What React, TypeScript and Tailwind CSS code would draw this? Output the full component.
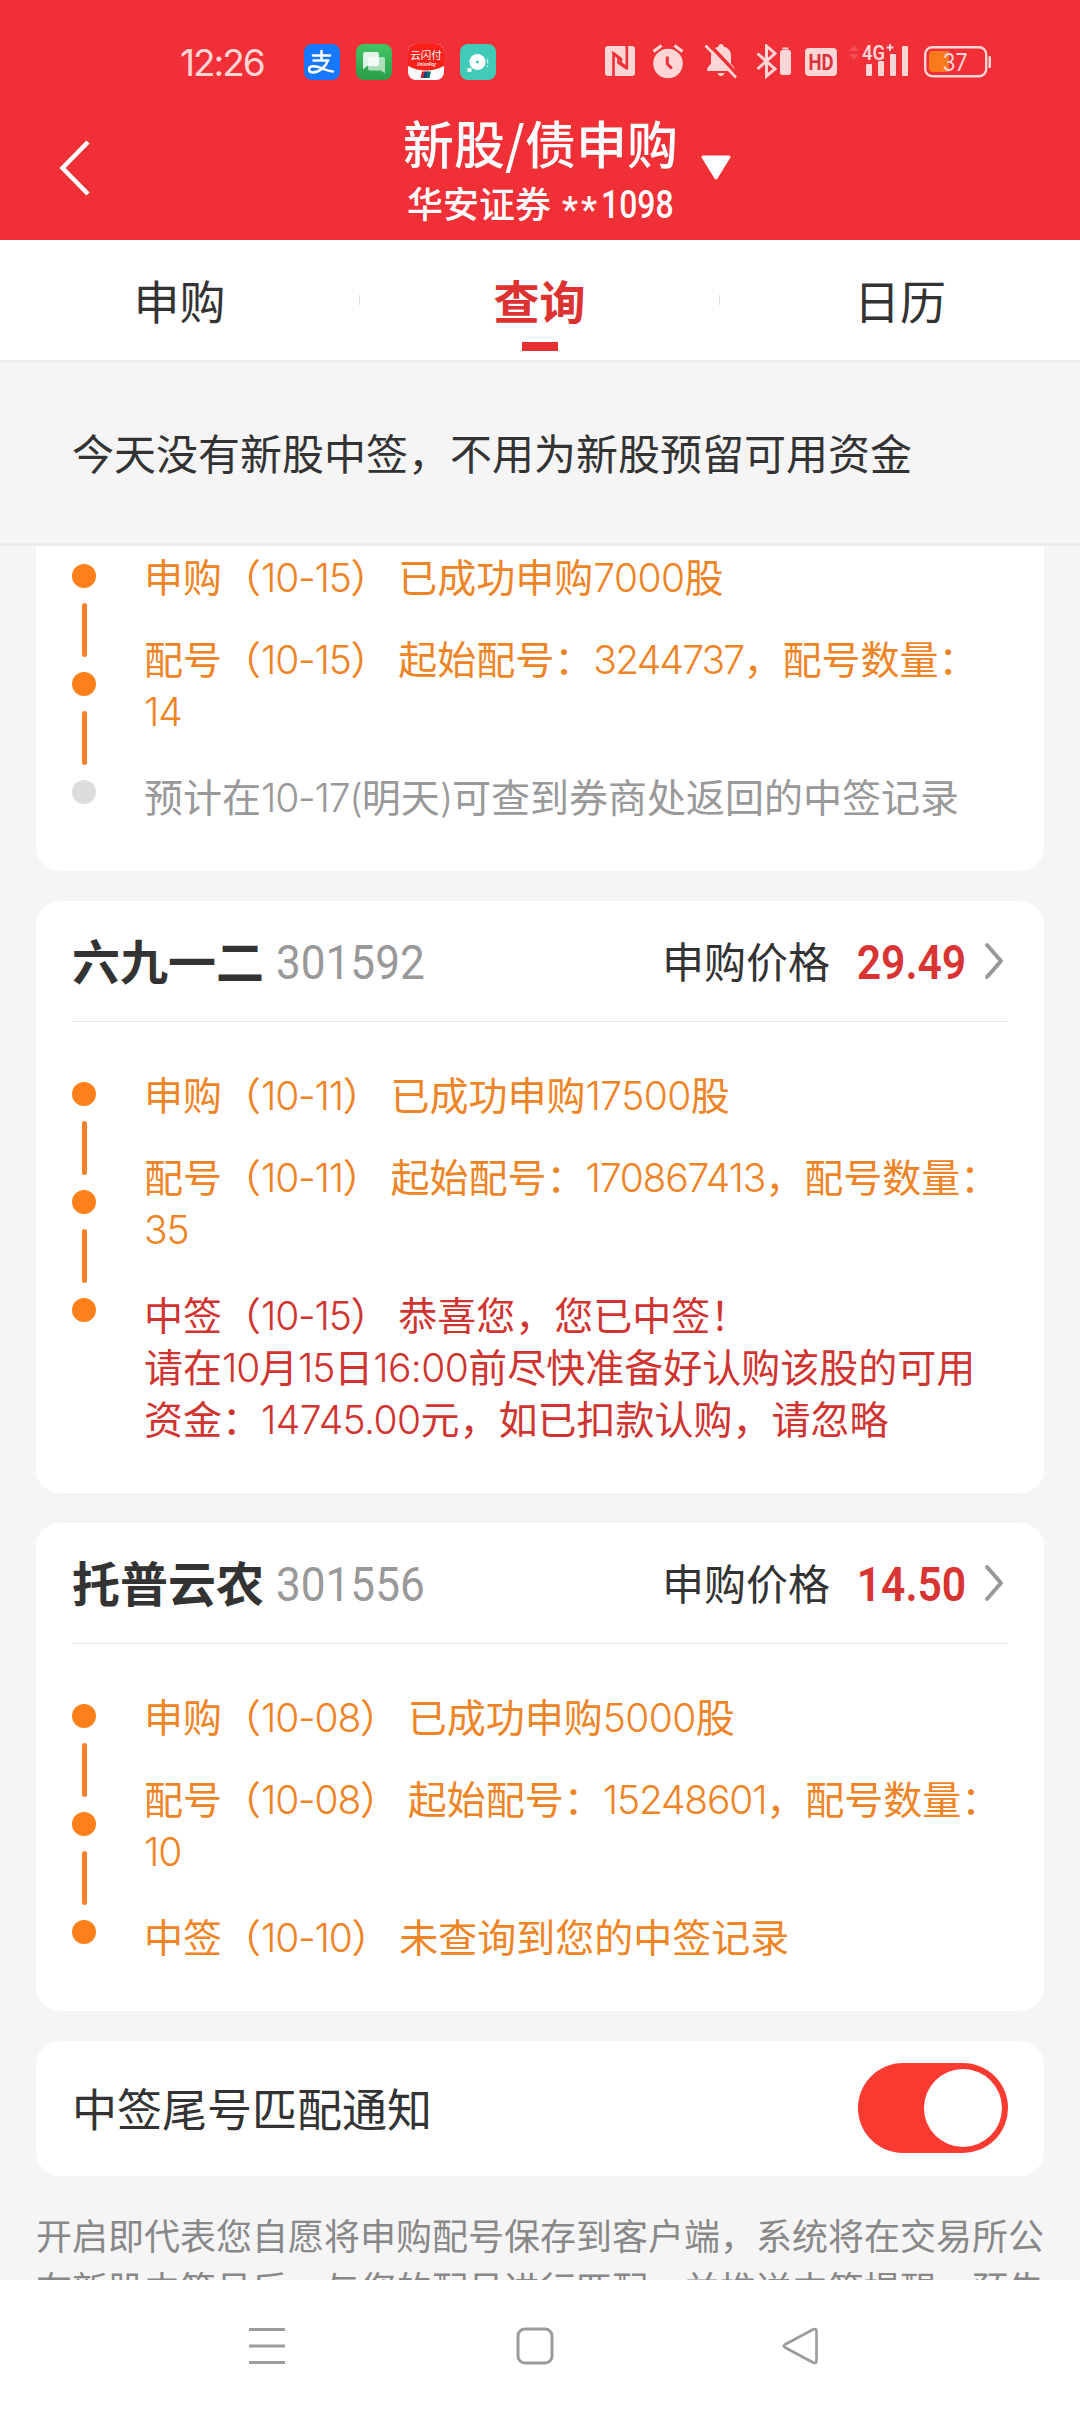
import { useState } from "react";
import clsx from "clsx";

type Tone = "orange" | "red" | "gray";

interface Step {
  lines: string[];
  tone: Tone;
}

interface Record {
  name: string;
  code: string;
  price: string;
  steps: Step[];
}

const tabs = ["申购", "查询", "日历"];

const firstSteps: Step[] = [
  { tone: "orange", lines: ["申购（10-15） 已成功申购7000股"] },
  { tone: "orange", lines: ["配号（10-15） 起始配号：3244737，配号数量：", "14"] },
  { tone: "gray", lines: ["预计在10-17(明天)可查到券商处返回的中签记录"] },
];

const records: Record[] = [
  {
    name: "六九一二",
    code: "301592",
    price: "29.49",
    steps: [
      { tone: "orange", lines: ["申购（10-11） 已成功申购17500股"] },
      { tone: "orange", lines: ["配号（10-11） 起始配号：170867413，配号数量：", "35"] },
      {
        tone: "red",
        lines: [
          "中签（10-15） 恭喜您，您已中签！",
          "请在10月15日16:00前尽快准备好认购该股的可用",
          "资金：14745.00元，如已扣款认购，请忽略",
        ],
      },
    ],
  },
  {
    name: "托普云农",
    code: "301556",
    price: "14.50",
    steps: [
      { tone: "orange", lines: ["申购（10-08） 已成功申购5000股"] },
      { tone: "orange", lines: ["配号（10-08） 起始配号：15248601，配号数量：", "10"] },
      { tone: "orange", lines: ["中签（10-10） 未查询到您的中签记录"] },
    ],
  },
];

const toneClass = {
  orange: "text-[#ee8426]",
  red: "text-[#d03430]",
  gray: "text-[#999999]",
};

// Digits use a rounder latin face than the Chinese text around them.
// Runs with a double zero are set looser than the rest.
function Mixed({ text }: { text: string }) {
  return (
    <>
      {text.split(/([0-9.:()-]+)/).map((part, i) =>
        i % 2 ? (
          <span
            key={i}
            className={clsx(
              "font-['Inter'] text-[39px] font-[350] leading-none",
              part.includes("00") ? "tracking-[-0.6px]" : part.includes("44") ? "tracking-[-1.8px]" : "tracking-[-1.2px]"
            )}
          >
            {part}
          </span>
        ) : (
          part
        )
      )}
    </>
  );
}

function StatusBar() {
  return (
    <div className="flex h-[124px] items-center pl-[180px] pr-[87px] text-[#ffd5d6]">
      <span className="w-[124px] font-['Inter'] text-[37px] leading-none tracking-[-2px]">12:26</span>
      <div className="flex gap-4">
        <svg width="36" height="36" viewBox="0 0 36 36">
          <rect width="36" height="36" rx="8" fill="#1677ff" />
          <g fill="none" stroke="#fff" strokeLinecap="round">
            <path d="M9 11.500h17M17.500 7v9" strokeWidth="2.600" />
            <path d="M9.500 16.500h14.500C22 22.500 15 28.500 9 28.500c-5 0-5.500-5.500-.5-6.200 6-.8 12 4.200 20.500 5.200" strokeWidth="2.400" />
          </g>
        </svg>
        <svg width="36" height="36" viewBox="0 0 36 36">
          <defs>
            <linearGradient id="msg" x1="0" y1="0" x2="0" y2="1">
              <stop stopColor="#43c463" />
              <stop offset="1" stopColor="#2a9d49" />
            </linearGradient>
          </defs>
          <rect width="36" height="36" rx="8" fill="url(#msg)" />
          <path d="M14 13h13q2 0 2 2v14.500l-4-3H14q-2 0-2-2V15q0-2 2-2z" fill="#fff" fillOpacity=".6" />
          <path d="M9 8h12q2 0 2 2v10q0 2-2 2H11l-4 3.500V10q0-2 2-2z" fill="#fff" fillOpacity=".85" />
        </svg>
        <svg width="36" height="36" viewBox="0 0 36 36">
          <rect width="36" height="36" rx="8" fill="#fff" />
          <path d="M0 22V8a8 8 0 0 1 8-8h20a8 8 0 0 1 8 8v14q-18 9-36 0z" fill="#fb2019" />
          <text x="18" y="15" textAnchor="middle" fontSize="10.500" fill="#fff" fontFamily="Noto Sans CJK SC">
            云闪付
          </text>
          <text x="18.500" y="22" textAnchor="middle" fontSize="5.500" fontStyle="italic" fontWeight="600" fill="#fff" textLength="19" lengthAdjust="spacingAndGlyphs" fontFamily="Open Sans">
            UnionPay
          </text>
          <path d="M14 27.500h3.500L16 34h-3.500z" fill="#d8232f" />
          <path d="M16.500 27.500h4L19 34h-4z" fill="#1d3f73" />
          <path d="M19.500 27.500H23L21.500 34H18z" fill="#0b6b6e" />
        </svg>
        <svg width="36" height="36" viewBox="0 0 36 36">
          <rect width="36" height="36" rx="8" fill="#41cab8" />
          <circle cx="17.500" cy="18" r="8" fill="#fff" />
          <circle cx="17.500" cy="18" r="1.600" fill="#41cab8" />
          <circle cx="9.500" cy="26" r="2.300" fill="#fff" />
          <path d="M27.500 14.500v5M27.500 21.500v1.500" stroke="#fff" strokeOpacity=".6" strokeWidth="1.600" />
        </svg>
      </div>

      <div className="ml-auto flex items-center">
        <svg className="mr-4" width="32" height="36" viewBox="0 0 32 36">
          <rect x="1" y="2" width="30" height="30" rx="3" fill="currentColor" />
          <path d="M9.500 32V9.500L18 16.500M22.800 2v21.500L14 17" fill="none" stroke="#f12f37" strokeWidth="2.600" />
          <path d="M9.500 8.500L17 14.500V20M14 12v7l9 6" fill="none" stroke="#f12f37" strokeWidth="1.600" />
        </svg>
        <svg className="mr-5" width="32" height="36" viewBox="0 0 32 36">
          <circle cx="16" cy="19.500" r="14.800" fill="currentColor" />
          <path d="M1.500 7.500l8-6M30.500 7.500l-8-6" stroke="currentColor" strokeWidth="3.200" />
          <path d="M15.300 12.500v7.500l4.500 4.500" fill="none" stroke="#f12f37" strokeWidth="3" />
        </svg>
        <svg className="mr-[18px]" width="34" height="36" viewBox="0 0 34 36">
          <path d="M17 0q2.500 0 2.500 2.500 7.500 2 7.500 9.500v8q4 3 4 7H3q0-4 4-7v-8q0-7 7.500-9.500Q14.500 0 17 0zM13.500 29h7q-1 3-3.500 3t-3.500-3z" fill="currentColor" />
          <path d="M4.500 -.5l30 32" stroke="#f12f37" strokeWidth="3.500" />
          <path d="M1.500 1.500l30.500 32" stroke="currentColor" strokeWidth="2.600" />
        </svg>
        <svg className="mr-3" width="36" height="36" viewBox="0 0 36 36">
          <path d="M1.500 9.500L19 25l-8.500 7V2L19 9.500 1.500 25" fill="none" stroke="currentColor" strokeWidth="3" />
          <rect x="24" y="6" width="11" height="25" rx="2.500" fill="currentColor" />
          <rect x="26.500" y="3.500" width="6" height="2" fill="currentColor" />
        </svg>
        <svg className="mr-3" width="33" height="36" viewBox="0 0 33 36">
          <rect x="1" y="4" width="32" height="28" rx="4" fill="currentColor" />
          <text x="17" y="25.500" textAnchor="middle" fontSize="21.500" fontWeight="700" fill="#d8323b" textLength="25" lengthAdjust="spacingAndGlyphs" fontFamily="Roboto">
            HD
          </text>
        </svg>
        <svg className="mr-[15px] overflow-visible" width="60" height="36" viewBox="0 0 60 36">
          <path d="M0 7l5-6 5 6zM0 10h10l-5 6z" fill="#fff" fillOpacity=".14" />
          <rect x="17" y="20" width="6" height="12" rx="1" fill="currentColor" />
          <rect x="29" y="17" width="6" height="15" rx="1" fill="currentColor" />
          <rect x="41" y="10" width="6" height="22" rx="1" fill="currentColor" />
          <rect x="53" y="2" width="6" height="30" rx="1" fill="currentColor" />
          <text x="13" y="15.500" fontSize="21" fontWeight="600" fill="currentColor" textLength="23" lengthAdjust="spacingAndGlyphs" fontFamily="Roboto">
            4G
          </text>
          <path d="M37.500 3.500h7M41 0v7" stroke="currentColor" strokeWidth="2" />
        </svg>
        <svg width="69" height="36" viewBox="0 0 69 36">
          <rect x="1.200" y="3.200" width="61" height="29" rx="7" fill="none" stroke="currentColor" strokeWidth="2.400" />
          <path d="M9 7h16v21H9q-4 0-4-4V11q0-4 4-4z" fill="#fb7a1e" />
          <rect x="64.500" y="12" width="2.500" height="12" rx="1" fill="currentColor" />
          <text x="31" y="26.500" textAnchor="middle" fontSize="24.500" fill="currentColor" textLength="25" lengthAdjust="spacingAndGlyphs" fontFamily="Inter">
            37
          </text>
        </svg>
      </div>
    </div>
  );
}

function Timeline({ steps }: { steps: Step[] }) {
  return (
    <div className="flex">
      <div className="mt-[13px] flex w-[72px] shrink-0 flex-col gap-[15px]">
        {steps.map((step, i) => (
          <div key={i} className="flex w-6 flex-col items-center gap-[15px]">
            {i > 0 && <div className="h-[54px] w-[5px] rounded-full bg-[#f5822b]" />}
            <div className={clsx("size-6 rounded-full", step.tone === "gray" ? "bg-[#dddddd]" : "bg-[#ff801a]")} />
          </div>
        ))}
      </div>
      <div className="-mt-[2px] mb-[2px] text-[39px] leading-[52px]">
        {steps.map((step, i) => (
          <div key={i} className={clsx(toneClass[step.tone], i === 1 && "mt-[30px]", i === 2 && "mt-[34px]")}>
            {step.lines.map((line) => (
              <p key={line} className="h-[52px] whitespace-pre">
                <Mixed text={line} />
              </p>
            ))}
          </div>
        ))}
      </div>
    </div>
  );
}

function RecordCard({ record }: { record: Record }) {
  return (
    <section className="shrink-0 rounded-[24px] bg-white px-9">
      <div className="flex h-[121px] items-center border-b border-[#e8e8e8]">
        <h2 className="pb-[5px] text-[48px] font-bold text-[#333333]">{record.name}</h2>
        <span className="ml-[12px] w-[150px] origin-left scale-x-[0.9] pt-[3px] font-['Roboto'] text-[49px] font-[450] text-[#999999]">
          {record.code}
        </span>
        <span className="ml-auto pb-[3px] text-[42px] text-[#333333]">申购价格</span>
        <span className="ml-[12px] w-[113px] origin-right scale-x-[0.87] pt-[3px] text-right font-['Roboto'] text-[49px] font-semibold text-[#d93434]">
          {record.price}
        </span>
        <svg className="ml-[28px] mr-[3px]" width="22" height="38" viewBox="0 0 22 38" fill="none" stroke="#999" strokeWidth="4" strokeLinecap="round" strokeLinejoin="round">
          <path d="M4 3l14 16L4 35" />
        </svg>
      </div>
      <div className="pb-[48px] pt-[47px]">
        <Timeline steps={record.steps} />
      </div>
    </section>
  );
}

export default function App() {
  const [active, setActive] = useState("查询");
  const [notify, setNotify] = useState(true);

  return (
    <div className="flex h-[2412px] w-[1080px] flex-col overflow-hidden bg-[#f5f5f5] font-['Noto_Sans_CJK_SC',sans-serif] text-[#333333]">
      {/* Header */}
      <header className="h-[240px] shrink-0 bg-[#f12f37] text-white">
        <StatusBar />
        <div className="flex h-[116px]">
          <svg className="ml-[58px] mt-[14px]" width="34" height="60" viewBox="0 0 34 60" fill="none" stroke="#fff" strokeWidth="4.500">
            <path d="M30 4L4.500 30 30 56" />
          </svg>
          <div className="ml-[311px] w-[274px] whitespace-nowrap">
            <h1 className="text-[51px] font-medium leading-[36px]">新股/债申购</h1>
            <p className="ml-1 mt-[27px] flex text-[36px] font-medium leading-[30px]">
              华安证券
              <span className="ml-[11px] pt-[8px] font-['Roboto'] tracking-[3px]">**</span>
              <span className="ml-[1px] origin-left scale-x-[0.84] pt-[3px] font-['Roboto'] text-[38px]">1098</span>
            </p>
          </div>
          <svg className="ml-[23px] mt-[31px]" width="32" height="26" viewBox="0 0 32 26">
            <path d="M3 2h26L16 23z" fill="#fff" stroke="#fff" strokeWidth="3" strokeLinejoin="round" />
          </svg>
        </div>
      </header>

      {/* Tabs */}
      <nav className="flex h-[123px] shrink-0 border-b-[3px] border-[#ececec] bg-white">
        {tabs.map((tab, i) => (
          <button key={tab} onClick={() => setActive(tab)} className="flex h-[120px] flex-1 items-center">
            <span className="flex h-[120px] flex-1 flex-col items-center">
              <span
                className={clsx(
                  "h-[102px] text-[46px] leading-[118px]",
                  active === tab ? "font-bold text-[#dc3232]" : "text-[#333333]"
                )}
              >
                {tab}
              </span>
              {active === tab && <span className="h-[9px] w-9 bg-[#e93030]" />}
            </span>
            {i < 2 && <span className="h-[10px] w-px bg-[#dddddd]" />}
          </button>
        ))}
      </nav>

      {/* Notice */}
      <div className="flex h-[183px] shrink-0 items-center border-b-[3px] border-[#ececec] px-[72px] pb-[3px] text-[42px]">
        今天没有新股中签，不用为新股预留可用资金
      </div>

      {/* Records */}
      <main className="flex h-[1734px] shrink-0 flex-col gap-[30px] overflow-hidden px-9">
        <section className="h-[325px] shrink-0 rounded-b-[24px] bg-white px-9 pt-[5px]">
          <Timeline steps={firstSteps} />
        </section>
        {records.map((record) => (
          <RecordCard key={record.code} record={record} />
        ))}
        <section className="flex h-[135px] shrink-0 items-center justify-between rounded-[24px] bg-white px-9">
          <span className="pb-[2px] text-[45px]">中签尾号匹配通知</span>
          <button
            role="switch"
            aria-checked={notify}
            onClick={() => setNotify(!notify)}
            className={clsx(
              "mb-[1px] flex h-[90px] w-[150px] items-center rounded-full px-[6px]",
              notify ? "justify-end bg-[#fb3b32]" : "justify-start bg-[#dddddd]"
            )}
          >
            <span className="size-[78px] rounded-full bg-white" />
          </button>
        </section>
        <p className="mt-[2px] w-[1010px] shrink-0 whitespace-pre text-[36px] leading-[53px] text-[#888888]">
          {"开启即代表您自愿将申购配号保存到客户端，系统将在交易所公\n布新股中签号后，与您的配号进行匹配，并推送中签提醒，预告"}
        </p>
      </main>

      {/* System navigation */}
      <footer className="flex flex-1 items-center bg-white pl-[248px]">
        <svg width="38" height="40" viewBox="0 0 38 40" stroke="#9b9b9b" strokeWidth="3">
          <path d="M1 3.500h36M1 20h36M1 36.500h36" />
        </svg>
        <svg className="ml-[230px]" width="38" height="40" viewBox="0 0 38 40" fill="none" stroke="#9b9b9b" strokeWidth="3">
          <rect x="2" y="3" width="34" height="34" rx="7" />
        </svg>
        <svg className="ml-[228px]" width="38" height="40" viewBox="0 0 38 40" fill="none" stroke="#9b9b9b" strokeWidth="2.600" strokeLinejoin="round">
          <path d="M3 18.500L31 3.500Q34.500 2 34.500 5.500V34.500Q34.500 38 31 36.500L3 21.500Q.500 20 3 18.500z" />
        </svg>
      </footer>
    </div>
  );
}
